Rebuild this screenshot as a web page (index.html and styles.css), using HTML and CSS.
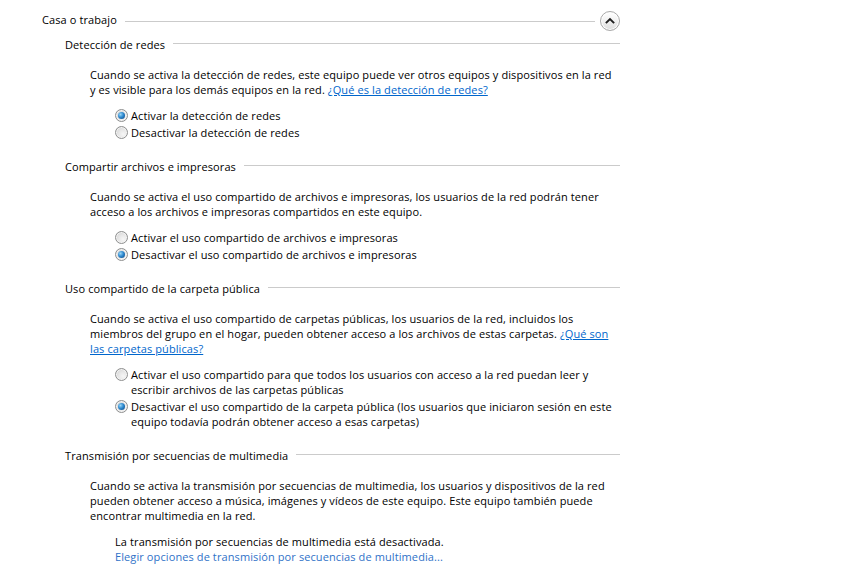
FILE: index.html
```html
<!DOCTYPE html>
<html lang="es">
<head>
<meta charset="utf-8">
<title>Configuración de uso compartido avanzado</title>
<link rel="stylesheet" href="styles.css">
</head>
<body>
<div class="page">
  <div class="group-head">
    <span class="group-title">Casa o trabajo</span>
    <span class="rule"></span>
    <button class="collapse" type="button" aria-label="Contraer">
      <svg width="20" height="20" viewBox="0 0 20 20"><path d="M6.2 11.6 L10 7.9 L13.8 11.6" fill="none" stroke="#1f1f1f" stroke-width="2.2" stroke-linecap="square" stroke-linejoin="miter"/></svg>
    </button>
  </div>

  <section class="section first">
    <div class="section-head"><span class="section-title">Detección de redes</span><span class="rule"></span></div>
    <p class="desc">Cuando se activa la detección de redes, este equipo puede ver otros equipos y dispositivos en la red<br>y es visible para los demás equipos en la red. <a href="#" class="link">¿Qué es la detección de redes?</a></p>
    <div class="options">
      <div class="option"><span class="radio checked"></span><span class="opt-text">Activar la detección de redes</span></div>
      <div class="option"><span class="radio"></span><span class="opt-text">Desactivar la detección de redes</span></div>
    </div>
  </section>

  <section class="section">
    <div class="section-head"><span class="section-title">Compartir archivos e impresoras</span><span class="rule"></span></div>
    <p class="desc">Cuando se activa el uso compartido de archivos e impresoras, los usuarios de la red podrán tener<br>acceso a los archivos e impresoras compartidos en este equipo.</p>
    <div class="options">
      <div class="option"><span class="radio"></span><span class="opt-text">Activar el uso compartido de archivos e impresoras</span></div>
      <div class="option"><span class="radio checked"></span><span class="opt-text">Desactivar el uso compartido de archivos e impresoras</span></div>
    </div>
  </section>

  <section class="section">
    <div class="section-head"><span class="section-title">Uso compartido de la carpeta pública</span><span class="rule"></span></div>
    <p class="desc">Cuando se activa el uso compartido de carpetas públicas, los usuarios de la red, incluidos los<br>miembros del grupo en el hogar, pueden obtener acceso a los archivos de estas carpetas. <a href="#" class="link">¿Qué son</a><br><a href="#" class="link">las carpetas públicas?</a></p>
    <div class="options">
      <div class="option"><span class="radio"></span><span class="opt-text">Activar el uso compartido para que todos los usuarios con acceso a la red puedan leer y<br>escribir archivos de las carpetas públicas</span></div>
      <div class="option"><span class="radio checked"></span><span class="opt-text">Desactivar el uso compartido de la carpeta pública (los usuarios que iniciaron sesión en este<br>equipo todavía podrán obtener acceso a esas carpetas)</span></div>
    </div>
  </section>

  <section class="section">
    <div class="section-head"><span class="section-title">Transmisión por secuencias de multimedia</span><span class="rule"></span></div>
    <p class="desc">Cuando se activa la transmisión por secuencias de multimedia, los usuarios y dispositivos de la red<br>pueden obtener acceso a música, imágenes y vídeos de este equipo. Este equipo también puede<br>encontrar multimedia en la red.</p>
    <div class="status">
      <div class="status-text">La transmisión por secuencias de multimedia está desactivada.</div>
      <a href="#" class="action">Elegir opciones de transmisión por secuencias de multimedia...</a>
    </div>
  </section>
</div>
</body>
</html>
```

FILE: styles.css
```css
html, body {
  margin: 0;
  padding: 0;
  background: #ffffff;
}

body {
  font-family: "Open Sans", "Noto Sans", "Liberation Sans", sans-serif;
  font-size: 11px;
  line-height: 15px;
  letter-spacing: 0.1px;
  color: #000000;
  overflow: hidden;
}

.page {
  width: 578px;
  padding: 11px 0 0 42px;
}

.group-head {
  display: flex;
  align-items: center;
  height: 20px;
}

.group-title {
  white-space: nowrap;
  margin-top: -4px;
}

.rule {
  flex: 1;
  height: 1px;
  background: #cbcbcb;
  margin-left: 8px;
}

.group-head .rule {
  margin-right: 5px;
}

.collapse {
  width: 20px;
  height: 20px;
  padding: 0;
  margin: 0;
  border: 1px solid #a9a9a9;
  border-radius: 50%;
  background: linear-gradient(#ffffff 0%, #f1f1f1 50%, #dcdcdc 100%);
  box-shadow: inset 0 0 0 1px #ffffff;
  display: flex;
  align-items: center;
  justify-content: center;
}

.collapse svg {
  display: block;
}

.section {
  padding-left: 23px;
  margin-top: 19px;
}

.section.first {
  margin-top: 6px;
}

.section-head {
  display: flex;
  align-items: center;
  height: 15px;
}

.section-title {
  white-space: nowrap;
}

.section-head .rule {
  margin-top: -2px;
}

.desc {
  margin: 15px 0 0 25px;
  white-space: nowrap;
}

.link {
  color: #0066cc;
  text-decoration: underline;
}

.options {
  margin: 11px 0 0 50px;
  display: flex;
  flex-direction: column;
  gap: 2px;
}

.option {
  display: flex;
  align-items: flex-start;
  white-space: nowrap;
}

.radio {
  position: relative;
  flex: none;
  box-sizing: border-box;
  width: 13px;
  height: 13px;
  margin: 1px 3px 0 0;
  border: 1px solid #8e8f8f;
  border-radius: 50%;
  background: radial-gradient(circle at 65% 65%, #f6f6f6 0%, #e6e6e6 45%, #c9c9c9 100%);
  box-shadow: inset 0 0 0 1px #f3f3f3;
}

.radio.checked::after {
  content: "";
  position: absolute;
  left: 2px;
  top: 2px;
  width: 7px;
  height: 7px;
  border-radius: 50%;
  background: radial-gradient(circle at 35% 35%, #9ad6f6 0%, #2e8ad0 45%, #0b3f78 100%);
}

.status {
  margin: 11px 0 0 50px;
  white-space: nowrap;
}

.action {
  display: block;
  color: #3072c8;
  text-decoration: none;
}
```
